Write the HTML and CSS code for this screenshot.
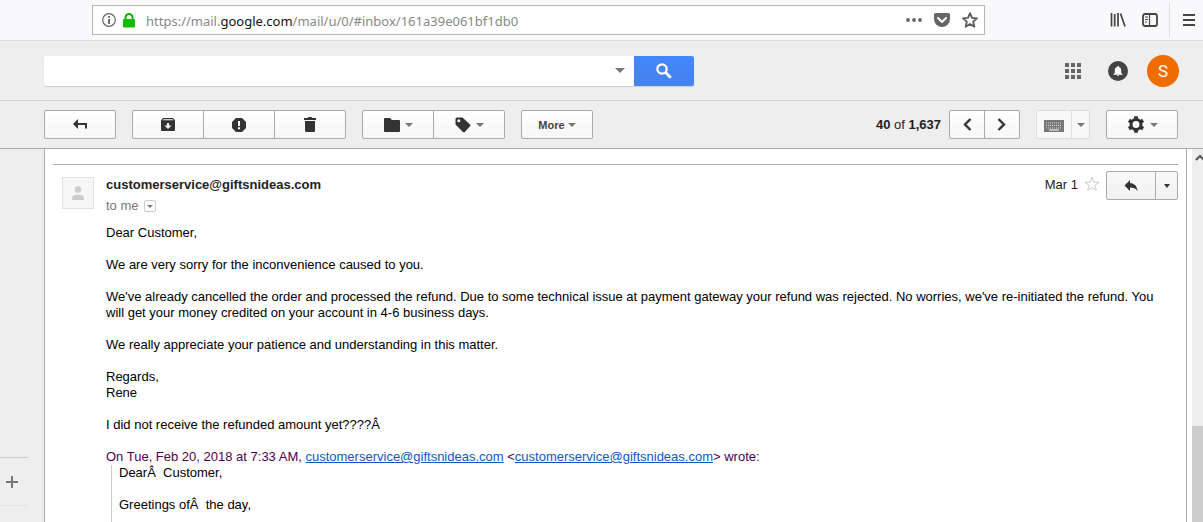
FILE: index.html
```html
<!DOCTYPE html>
<html lang="en">
  <head>
    <meta charset="UTF-8" />
    <title>Mail</title>
    <link rel="stylesheet" href="styles.css">
  </head>
  <body>
    <!-- browser bar -->
    <div class="browser">
      <div class="urlbar">
        <svg width="14" height="14" viewBox="0 0 14 14"><circle cx="7" cy="7" r="6.3" fill="none" stroke="#666" stroke-width="1.2"/><path d="M6.2 3h1.7v1.7H6.2zM6.2 6h1.7v5H6.2z" fill="#555"/></svg>
        <svg class="lock" width="14" height="15" viewBox="0 0 14 15"><path d="M3.5 7V4.5a3.5 3.5 0 0 1 7 0V7" fill="none" stroke="#12a80a" stroke-width="2"/><rect x="1" y="6" width="12" height="8.5" rx="1" fill="#12bc00"/></svg>
        <div class="url" role="textbox" contenteditable="true" spellcheck="false" aria-label="Address">https://mail.<b>google.com</b>/mail/u/0/#inbox/161a39e061bf1db0</div>
        <button class="icon-btn" aria-label="Page actions"><svg width="16" height="16" viewBox="0 0 16 16" fill="#666"><circle cx="2" cy="8" r="1.9"/><circle cx="8" cy="8" r="1.9"/><circle cx="14" cy="8" r="1.9"/></svg></button>
        <button class="icon-btn" aria-label="Save to Pocket"><svg width="16" height="16" viewBox="0 0 16 16"><path d="M1.5 1h13A1.5 1.5 0 0 1 16 2.5V7a8 8 0 0 1-16 0V2.5A1.5 1.5 0 0 1 1.5 1z" fill="#666"/><path d="M4 6l4 4 4-4" fill="none" stroke="#fff" stroke-width="2" stroke-linecap="round" stroke-linejoin="round"/></svg></button>
        <button class="icon-btn" aria-label="Bookmark"><svg width="16" height="16" viewBox="0 0 16 16"><path d="M8 1.2l2 4.7 5 .4-3.800 3.400 1.200 5L8 12l-4.400 2.700 1.200-5L1 6.300l5-.4z" fill="none" stroke="#5c5c5c" stroke-width="1.8" stroke-linejoin="round"/></svg></button>
      </div>
      <div class="browser-tools">
        <button class="icon-btn" aria-label="Library"><svg width="16" height="16" viewBox="0 0 16 16" stroke="#444" stroke-width="1.7" fill="none"><path d="M1.500 1v13.500M4.700 2v12.500M8 1v13.500M10.500 1.500l4.500 13"/></svg></button>
        <button class="icon-btn" aria-label="Sidebars"><svg width="16" height="16" viewBox="0 0 16 16" fill="none" stroke="#444"><rect x="1" y="2" width="14" height="12" rx="2" stroke-width="1.8"/><path d="M7.500 2v12" stroke-width="1.2"/><path d="M3 5h3M3 7.500h3M3 10h2"/></svg></button>
      </div>
      <div class="browser-menu">
        <button class="icon-btn" aria-label="Open menu"><svg width="12" height="12" viewBox="0 0 12 12" stroke="#444" stroke-width="2"><path d="M0 1h12M0 6h12M0 11h12"/></svg></button>
      </div>
    </div>

    <!-- search + account -->
    <header class="header">
      <form class="search">
        <input class="search-input" type="text" aria-label="Search mail" />
        <button class="search-options" type="button" aria-label="Search options"><span class="arrow big"></span></button>
        <button class="search-btn" type="button" aria-label="Search"><svg width="16" height="16" viewBox="0 0 16 16" fill="none" stroke="#fff"><circle cx="6" cy="6" r="4.7" stroke-width="2.200"/><path d="M9.300 9.300l5.500 5.500" stroke-width="2.800"/></svg></button>
      </form>
      <div class="account">
        <button class="icon-btn" aria-label="Apps"><svg width="16" height="16" viewBox="0 0 16 16" fill="#666"><path d="M0 0h4v4H0zM6 0h4v4H6zM12 0h4v4h-4zM0 6h4v4H0zM6 6h4v4H6zM12 6h4v4h-4zM0 12h4v4H0zM6 12h4v4H6zM12 12h4v4h-4z"/></svg></button>
        <button class="icon-btn" aria-label="Notifications"><svg width="20" height="20" viewBox="0 0 20 20"><circle cx="10" cy="10" r="10" fill="#444"/><path d="M10 5c.6 0 1 .4 1 .9 1.500.4 2.200 1.600 2.200 3.200V12l1.300 1.200v.5h-9v-.5L6.800 12V9.100c0-1.600.7-2.800 2.200-3.200 0-.5.4-.9 1-.9zM9 14.200h2c0 .5-.4.900-1 .9s-1-.4-1-.9z" fill="#fff"/></svg></button>
        <button class="avatar" aria-label="Account">S</button>
      </div>
    </header>

    <!-- mail toolbar -->
    <div class="toolbar">
      <div class="group">
        <button class="btn" aria-label="Back to Inbox"><svg width="16" height="12" viewBox="0 0 16 12"><path d="M6 0v10L1 5z" fill="#333"/><path d="M5 5h9v4.500" fill="none" stroke="#333" stroke-width="2"/></svg></button>
      </div>
      <div class="group">
        <button class="btn" aria-label="Archive"><svg width="14" height="13" viewBox="0 0 14 13"><path fill-rule="evenodd" d="M2 0h10l2 2.500V12a1 1 0 0 1-1 1H1a1 1 0 0 1-1-1V2.500zM2.500 1.200L1.700 2.200h10.600l-.8-1zM6 5v2.500H3.500L7 11l3.500-3.500H8V5z" fill="#333"/></svg></button>
        <button class="btn" aria-label="Report spam"><svg width="14" height="14" viewBox="0 0 14 14"><path d="M4 0h6l4 4v6l-4 4H4l-4-4V4z" fill="#333"/><path d="M6 3h2v5H6zM6 9.200h2v2H6z" fill="#fff"/></svg></button>
        <button class="btn" aria-label="Delete"><svg width="12" height="16" viewBox="0 0 12 16" fill="#333"><path d="M0 1h3.500l1-1h3l1 1H12v2H0zM1 4h10v9.500A1.500 1.500 0 0 1 9.500 15h-7A1.500 1.500 0 0 1 1 13.500z"/></svg></button>
      </div>
      <div class="group">
        <button class="btn" aria-label="Move to"><svg width="16" height="14" viewBox="0 0 16 14"><path d="M1 0h5l2 2h7a1 1 0 0 1 1 1v10a1 1 0 0 1-1 1H1a1 1 0 0 1-1-1V1a1 1 0 0 1 1-1z" fill="#333"/></svg><span class="arrow"></span></button>
        <button class="btn" aria-label="Labels"><svg width="16" height="16" viewBox="0 0 16 16"><path fill-rule="evenodd" d="M2 .5h5.500l7.500 7a1.300 1.300 0 0 1 0 1.800L9.800 15a1.300 1.300 0 0 1-1.800 0L.5 7.500V2A1.500 1.500 0 0 1 2 .5zM3.800 2.300a1.500 1.500 0 1 0 0 3 1.500 1.500 0 0 0 0-3z" fill="#333"/></svg><span class="arrow"></span></button>
      </div>
      <div class="group">
        <button class="btn more">More<span class="arrow"></span></button>
      </div>
      <div class="count"><b>40</b> of <b>1,637</b></div>
      <div class="group">
        <button class="btn narrow" aria-label="Newer"><svg width="10" height="14" viewBox="0 0 10 14"><path d="M8.500 1L3 6.500 8.500 12" fill="none" stroke="#333" stroke-width="2.400"/></svg></button>
        <button class="btn narrow" aria-label="Older"><svg width="10" height="14" viewBox="0 0 10 14"><path d="M1.500 1L7 6.500 1.500 12" fill="none" stroke="#333" stroke-width="2.400"/></svg></button>
      </div>
      <div class="group light">
        <button class="btn narrow" aria-label="Input tools"><svg width="20" height="14" viewBox="0 0 20 14"><path d="M0 2h20v12H0z" fill="#777"/><path d="M2 5h16M2 7.500h16M2 10h16" stroke="#ddd" stroke-dasharray="1 1"/><path d="M5 12h10" stroke="#fff"/></svg></button>
        <button class="btn tiny" aria-label="Select input tool"><span class="arrow"></span></button>
      </div>
      <div class="group">
        <button class="btn" aria-label="Settings"><svg width="18" height="18" viewBox="0 0 18 18" fill="none" stroke="#333"><circle cx="9" cy="8.500" r="5" stroke-width="3"/><path d="M9 .3v3M9 13.700v3M1.900 4.400l2.600 1.500M13.500 11.100l2.600 1.500M1.900 12.600l2.600-1.500M13.500 5.900l2.600-1.500" stroke-width="3.800"/></svg><span class="arrow"></span></button>
      </div>
    </div>

    <main class="main">
      <aside class="side">
        <div class="chat"><button class="icon-btn" aria-label="New conversation"><svg width="12" height="12" viewBox="0 0 12 12" stroke="#777" stroke-width="2"><path d="M6 0v12M0 6h12"/></svg></button></div>
      </aside>
      <section class="pane">
        <article class="mail">
          <div class="photo"><svg width="12" height="14" viewBox="0 0 12 14" fill="#ccc"><circle cx="6" cy="3.500" r="3.2"/><path d="M0 14v-2c0-2.200 2.500-3.300 6-3.300s6 1.100 6 3.300v2z"/></svg></div>
          <div class="content">
            <div class="mail-head">
              <div class="sender">
                <h3>customerservice@giftsnideas.com</h3>
                <div class="to">to me <button class="details" aria-label="Show details"><span class="arrow small"></span></button></div>
              </div>
              <div class="date">Mar 1</div>
              <button class="icon-btn star" aria-label="Star"><svg width="16" height="16" viewBox="0 0 16 16"><path d="M8 1.200l1.800 4.900 5.200.2-4.100 3.200 1.500 5L8 11.600l-4.400 2.900 1.500-5L1 6.300l5.200-.2z" fill="none" stroke="#ccc"/></svg></button>
              <div class="group reply">
                <button class="btn" aria-label="Reply"><svg width="14" height="12" viewBox="0 0 14 12"><path d="M6 0v3c4.500.4 7 3 7.500 8C11.700 8.500 9.500 7.600 6 7.600V11L.5 5.500z" fill="#333"/></svg></button>
                <button class="btn tiny" aria-label="More reply options"><span class="arrow dark"></span></button>
              </div>
            </div>
            <div class="text">
              <p>Dear Customer,</p>
              <p>We are very sorry for the inconvenience caused to you.</p>
              <p>We've already cancelled the order and processed the refund. Due to some technical issue at payment gateway your refund was rejected. No worries, we've re-initiated the refund. You will get your money credited on your account in 4-6 business days.</p>
              <p>We really appreciate your patience and understanding in this matter.</p>
              <p>Regards,<br>Rene</p>
              <p>I did not receive the refunded amount yet????Â</p>
              <div class="quoted">On Tue, Feb 20, 2018 at 7:33 AM, <a href="#">customerservice@giftsnideas.com</a> &lt;<a href="#">customerservice@giftsnideas.com</a>&gt; wrote:</div>
              <blockquote>
                <p>DearÂ&nbsp; Customer,</p>
                <p>Greetings ofÂ&nbsp; the day,</p>
              </blockquote>
            </div>
          </div>
        </article>
      </section>
      <div class="scrollbar">
        <svg width="11" height="18" viewBox="0 0 11 18"><path d="M4 11l4-4 4 4" fill="none" stroke="#555" stroke-width="2"/></svg>
        <div class="thumb"></div>
      </div>
    </main>
  </body>
</html>
```
FILE: styles.css
```css
* {
  box-sizing: border-box;
}
body {
  margin: 0;
  height: 100vh;
  display: flex;
  flex-direction: column;
  overflow: hidden;
  background: #eee;
  color: #222;
  font-family: "Liberation Sans", Arial, sans-serif;
  font-size: 13px;
  line-height: 16px;
}
button {
  margin: 0;
  padding: 0;
  border: none;
  background: none;
  font-family: inherit;
  cursor: pointer;
}
svg {
  display: block;
  flex: none;
}
.icon-btn {
  display: flex;
  align-items: center;
}

/* browser bar */
.browser {
  flex: none;
  height: 41px;
  display: flex;
  align-items: center;
  padding-left: 92px;
  background: #f9f9fb;
  border-bottom: 1px solid #ddd;
}
.urlbar {
  flex: 1;
  height: 30px;
  display: flex;
  align-items: center;
  gap: 12px;
  padding: 0 6px 0 9px;
  background: #fff;
  border: 1px solid #b8b8b8;
}
.urlbar .lock {
  margin-left: -6px;
}
.url {
  flex: 1;
  margin-left: -2px;
  padding-top: 2px;
  color: #888;
  font-family: "Noto Sans", sans-serif;
  font-size: 13px;
  outline: none;
}
.url b {
  color: #111;
  font-weight: normal;
}
.browser-tools {
  display: flex;
  gap: 16px;
  padding: 0 11px 0 125px;
}
.browser-menu {
  height: 34px;
  display: flex;
  padding: 0 8px 0 13px;
  border-left: 1px solid #ddd;
}

/* search and account */
.header {
  flex: none;
  height: 60px;
  display: flex;
  align-items: center;
  justify-content: space-between;
  padding: 0 24px 0 44px;
  border-bottom: 1px solid #d2d2d2;
}
.search {
  width: 650px;
  height: 30px;
  display: flex;
  background: #fff;
  border-radius: 2px;
  box-shadow: 0 1px 1px #ccc;
}
.search-input {
  flex: 1;
  padding: 0 8px;
  border: none;
  outline: none;
  background: none;
}
.search-options {
  width: 28px;
  display: flex;
  align-items: center;
  justify-content: center;
}
.search-btn {
  width: 60px;
  display: flex;
  align-items: center;
  justify-content: center;
  background: linear-gradient(#4387fd, #4683ea);
  border-radius: 0 2px 2px 0;
}
.account {
  display: flex;
  align-items: center;
  gap: 19px;
}
.account .icon-btn:first-child {
  margin-right: 8px;
}
.avatar {
  width: 32px;
  height: 32px;
  border-radius: 50%;
  background: #ef6c00;
  color: #fff;
  font-family: Roboto, sans-serif;
  font-size: 17px;
}
.arrow {
  border: 4px solid transparent;
  border-top-color: #777;
  border-bottom: none;
}
.arrow.big {
  border-width: 5px 5px 0;
}
.arrow.small {
  border-width: 3px 3px 0;
}
.arrow.dark {
  border-width: 4px 3px 0;
  border-top-color: #333;
}

/* toolbar */
.toolbar {
  flex: none;
  height: 48px;
  display: flex;
  align-items: center;
  gap: 16px;
  padding: 0 25px 0 44px;
  border-bottom: 1px solid #aaa;
}
.group {
  display: flex;
}
.btn {
  width: 72px;
  height: 29px;
  display: flex;
  align-items: center;
  justify-content: center;
  gap: 5px;
  background: linear-gradient(#fff, #f6f6f6);
  border: 1px solid #aaa;
}
.btn + .btn {
  margin-left: -1px;
}
.btn:first-child {
  border-radius: 2px 0 0 2px;
}
.btn:last-child {
  border-radius: 0 2px 2px 0;
}
.btn:only-child {
  border-radius: 2px;
}
.btn.narrow {
  width: 36px;
}
.btn.tiny {
  width: 20px;
}
.more {
  gap: 3px;
  color: #444;
  font-size: 11px;
  font-weight: bold;
}
.light .btn {
  border-color: #ddd;
  background: #f8f8f8;
}
.light .btn.tiny {
  width: 19px;
}
.count {
  margin-left: auto;
  margin-right: -8px;
}

/* reading pane */
.main {
  flex: 1;
  min-height: 0;
  display: flex;
}
.side {
  width: 44px;
  display: flex;
  flex-direction: column;
  justify-content: flex-end;
  padding-bottom: 16px;
}
.chat {
  width: 28px;
  height: 49px;
  display: flex;
  padding-left: 6px;
  border-top: 1px solid #ccc;
  border-bottom: 1px solid #e2e2e2;
}
.pane {
  flex: 1;
  padding: 15px 8px 0;
  background: #fff;
  border-left: 1px solid #aaa;
  border-right: 1px solid #aaa;
  overflow: hidden;
}
.mail {
  display: flex;
  gap: 12px;
  padding-left: 9px;
  border-top: 1px solid #aaa;
}
.photo {
  flex: none;
  width: 32px;
  height: 32px;
  margin-top: 12px;
  display: flex;
  align-items: center;
  justify-content: center;
  background: #f6f6f6;
  border: 1px solid #e2e2e2;
}
.content {
  flex: 1;
}
.mail-head {
  display: flex;
  align-items: flex-start;
  padding-top: 6px;
}
.sender {
  flex: 1;
  padding-top: 6px;
}
.sender h3 {
  margin: 0;
  font-size: 13px;
}
.to {
  display: flex;
  align-items: center;
  gap: 5px;
  margin-top: 5px;
  color: #777;
}
.details {
  width: 12px;
  height: 12px;
  display: flex;
  align-items: center;
  justify-content: center;
  border: 1px solid #ccc;
  border-radius: 2px;
}
.date {
  padding-top: 6px;
}
.star {
  margin: 5px 6px 0;
}
.reply .btn {
  width: 50px;
  background: linear-gradient(#f8f8f8, #f1f1f1);
}
.reply .btn.tiny {
  width: 23px;
}
.text {
  margin-top: 11px;
  padding-right: 10px;
  color: #000;
}
.text p {
  margin: 0 0 16px;
}
.quoted {
  color: #500050;
}
.quoted a {
  color: #15c;
}
.text blockquote {
  margin: 0 0 0 5px;
  padding: 0 0 16px 7px;
  border-left: 1px solid #ccc;
}
.scrollbar {
  width: 16px;
  display: flex;
  flex-direction: column;
  background: #eee;
  border-left: 5px solid #fff;
}
.thumb {
  flex: 1;
  margin-top: 259px;
  background: #cdcdcd;
}
```
